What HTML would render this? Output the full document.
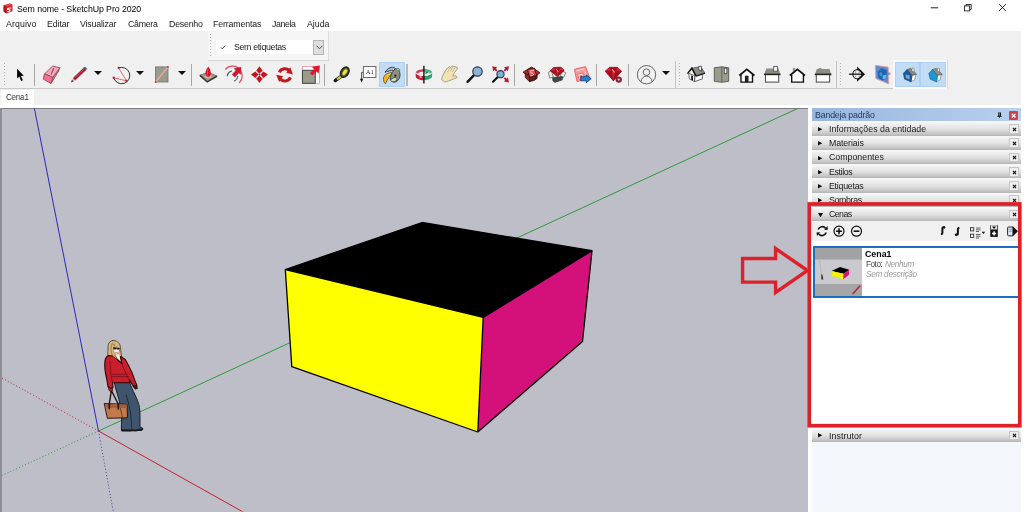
<!DOCTYPE html>
<html lang="pt-BR">
<head>
<meta charset="utf-8">
<title>Sem nome - SketchUp Pro 2020</title>
<style>
*{margin:0;padding:0;box-sizing:border-box}
html,body{width:1024px;height:513px;overflow:hidden;background:#fff}
body{position:relative;font-family:"Liberation Sans",sans-serif;font-size:9px;color:#1a1a1a}
.a{position:absolute}
.t{position:absolute;white-space:nowrap;line-height:12px;height:12px;z-index:5;will-change:transform}
#annot{z-index:10}
#titlebar{left:0;top:0;width:1024px;height:17px;background:#fff}
#menubar{left:0;top:17px;width:1024px;height:14px;background:#fff}
#chrome{left:0;top:30.700px;width:1021px;height:58px;background:#f0f0f0}
#tbline{left:0;top:88px;width:948px;height:1px;background:#c8c8c8}
#tabrow{left:0;top:89px;width:1021px;height:15.600px;background:#f0f0f0}
#tab{left:.5px;top:89.500px;width:33.600px;height:18px;background:#fff}
#tabwhite{left:0;top:104.600px;width:1024px;height:3.400px;background:#fff}
#vpborder{left:0;top:107.700px;width:807.800px;height:1.200px;background:#7c7c82}
#viewport{left:0;top:108px;width:807.800px;height:403.600px;background:#bebec8;overflow:hidden}
#vpleft{left:0;top:108px;width:2px;height:403.600px;background:#8e8e96}
#tray{left:808px;top:106px;width:216px;height:407px;background:#fff}
#traybody{left:812px;top:108px;width:209px;height:403.600px;background:#f4f7fc}
#trayhead{left:812px;top:107.800px;width:209px;height:13.700px;background:linear-gradient(90deg,#98b6de 0%,#a9c3e6 50%,#b9d0ee 100%)}
.sec{position:absolute;left:812px;width:209px;height:12.300px;background:linear-gradient(180deg,#f2f2f2 0%,#e2e2e2 45%,#c4c4c4 85%,#b4b4b4 100%)}
.secgap{position:absolute;left:812px;width:209px;height:3px;background:#fafafa}
.sx{position:absolute;left:1009.200px;width:9.800px;height:9.800px;background:#ededed;border:1px solid #c6c6c6}
.tri{position:absolute;width:0;height:0;border-left:4px solid #111;border-top:2.5px solid transparent;border-bottom:2.5px solid transparent}
.dd{position:absolute;width:0;height:0;border-top:4.600px solid #111;border-left:4px solid transparent;border-right:4px solid transparent}
.sep{position:absolute;width:1px;background:#a8a8a8}
.grip{position:absolute;width:1px;background:repeating-linear-gradient(180deg,#b0b0b0 0 1px,transparent 1px 3px)}
.hl{position:absolute;background:#c3dcf6;border:1px solid #aed0f2}
</style>
</head>
<body>
<div class="a" id="titlebar"></div>
<div class="a" id="menubar"></div>
<div class="a" id="chrome"></div>
<div class="a" id="tbline"></div>
<div class="a" id="tabrow"></div>
<div class="a" id="tab"></div>
<div class="a" id="tabwhite"></div>
<div class="a" id="viewport"></div>
<div class="a" id="vpborder"></div>
<div class="a" id="vpleft"></div>
<div class="a" id="tray"></div>
<div class="a" id="traybody"></div>
<div class="a" id="trayhead"></div>
<svg class="a" id="scene" style="left:0;top:0" width="1024" height="513" viewBox="0 0 1024 513">
<defs><clipPath id="vpc"><rect x="2" y="108.5" width="805.5" height="403"/></clipPath></defs>
<g clip-path="url(#vpc)">
<!-- axes -->
<line x1="98.5" y1="431" x2="34.3" y2="108" stroke="#2a2ab8" stroke-width="1"/>
<line x1="98.5" y1="431" x2="113.5" y2="513" stroke="#3a3ab8" stroke-width="1" stroke-dasharray="1 2.2"/>
<line x1="98.5" y1="431" x2="800" y2="107.4" stroke="#2c9a3a" stroke-width="1"/>
<line x1="98.5" y1="431" x2="0" y2="476.4" stroke="#2c9a3a" stroke-width="1" stroke-dasharray="1 2.2"/>
<line x1="98.5" y1="431" x2="246" y2="513.6" stroke="#c0202c" stroke-width="1"/>
<line x1="98.5" y1="431" x2="0" y2="377" stroke="#c0202c" stroke-width="1" stroke-dasharray="1 2.2"/>
<!-- cube -->
<polygon points="285.3,269.5 422,222.5 592,250.7 483.2,317.4" fill="#000"/>
<polygon points="285.3,269.5 483.2,317.4 477.8,432 291.8,366.7" fill="#ffff00"/>
<polygon points="483.2,317.4 592,250.7 582.5,341.5 477.8,432" fill="#d4107a"/>
<g fill="none" stroke="#000" stroke-width="1.3" stroke-linejoin="round">
<polygon points="285.3,269.5 422,222.5 592,250.7 582.5,341.5 477.8,432 291.8,366.7"/>
<polyline points="285.3,269.5 483.2,317.4 592,250.7"/>
<line x1="483.2" y1="317.4" x2="477.8" y2="432"/>
</g>
<!--PERSONBEGIN-->
<g id="person" stroke-linejoin="round" stroke-linecap="round">
<!-- pants -->
<path d="M114.400 382.500L129.800 382.500C132 390 138.500 400 139.500 407.500 140.300 414 140 422 140 427L142.800 428.200 142.500 430 136 430.800 132.500 430.500 130 431 121.600 430.800 121.300 428C122 420 121.500 412 120.500 406 119 398 115.500 390 114.400 382.500Z" fill="#3f556d" stroke="#0e1620" stroke-width=".9"/>
<path d="M126 395C129 403 131.500 414 131.800 429.500" fill="none" stroke="#16222e" stroke-width=".8"/>
<!-- shoes -->
<path d="M121.500 429.300L130.500 429.600 136 429.500 142.600 428.300 142.500 430.300 136 431.200 121.600 431.200Z" fill="#15181c"/>
<!-- hair back -->
<path d="M112.800 340.500C109.800 340.700 108.200 343.300 108.100 346.500 108 350 107.600 353.500 107.900 356L112 357.500 120.500 357 122.300 363.300 123.600 361.500 121.300 355C120.900 352 120.700 349 120.200 346 119.500 342.300 116 340.200 112.800 340.500Z" fill="#d6b87e" stroke="#4a3818" stroke-width=".8"/>
<!-- neck / chest -->
<path d="M114.500 353.500L119 354.500 121.500 362 117.500 358.500Z" fill="#f4e6de"/>
<!-- jacket -->
<path d="M108.700 355.500C106.500 356.500 105.300 358 105 360.500 104.500 365 105 372 106.500 378L108 386.500 110.200 388.500 113 387.500 112.600 382.800 129.800 382.800 129.300 379.500 133.500 386.500 136.800 385 135 381C133 374 128.500 365 125.300 359.500L120.500 356.500 121.800 363.500 113.500 356Z" fill="#c91f2c" stroke="#2a0808" stroke-width="1.100"/>
<path d="M113.500 356L121.800 363.500 120.500 356.500" fill="none" stroke="#3a0c10" stroke-width=".8"/>
<path d="M112.600 374.300L127.400 374.300M112 376.600L128.200 376.600" stroke="#6a1018" stroke-width=".7" fill="none"/>
<path d="M110 362C110.500 370 111.300 378 112.600 382.800" fill="none" stroke="#6a1018" stroke-width=".8"/>
<path d="M122 364C123.500 369 126.500 375 129.300 379.500" fill="none" stroke="#6a1018" stroke-width=".8"/>
<!-- hair front strands -->
<path d="M112 344C110.500 348 110.800 352 112.500 355.500L117 359.500C114.500 355 113.500 350 114.500 345Z" fill="#d6b87e" stroke="#5a4420" stroke-width=".5"/>
<!-- face -->
<ellipse cx="116.400" cy="350.500" rx="3.100" ry="3.600" fill="#f8ecea" stroke="#7a5a4a" stroke-width=".5"/>
<path d="M113.200 347.300L119.700 347.900 119.500 349.500 116.900 349.600 116.400 348.600 115.800 349.500 113.400 349.200Z" fill="#1a1a22"/>
<path d="M115.300 352.300L117.500 352.500" stroke="#c05050" stroke-width=".6"/>
<!-- hands -->
<path d="M108.500 386.500L110.300 388.600 112.800 387.600 112.500 391 110.500 391.800 108.900 390Z" fill="#b81c28" stroke="#3a0c10" stroke-width=".7"/>
<path d="M133.600 386.300L136.800 385 137.500 388.500 135.300 389.300 134 388Z" fill="#3a1418" stroke="#1a0808" stroke-width=".6"/>
<!-- bag -->
<path d="M111.200 391.500L109.300 404 109.300 408.500M112.200 392L118.200 404 118.400 408.500" fill="none" stroke="#1c100a" stroke-width="1.400"/>
<path d="M104.600 403.500L127 404.300 127.500 417.800 107.800 418.300Z" fill="#c27a4a" stroke="#2a1408" stroke-width="1"/>
<path d="M104.800 403.800L126.900 404.600 127 408 105.400 407.500Z" fill="#a05e3a"/>
<path d="M120.400 408.300L122.600 417.800" stroke="#5a3018" stroke-width=".8"/>
<path d="M109.300 403.800V408.800M118.300 404V409" stroke="#1c100a" stroke-width="1.600"/>
</g>
<!--PERSONEND-->
</g>
</svg>

<!--TEXTBEGIN-->
<span class="t" id="t_title" style="left:16.90px;top:2.55px;font-size:8.8px;letter-spacing:-0.091px;color:#000">Sem nome - SketchUp Pro 2020</span>
<span class="t" id="m1" style="left:5.50px;top:17.95px;font-size:8.8px;letter-spacing:0.094px;">Arquivo</span>
<span class="t" id="m2" style="left:47.00px;top:17.95px;font-size:8.8px;letter-spacing:-0.110px;">Editar</span>
<span class="t" id="m3" style="left:80.00px;top:17.95px;font-size:8.8px;letter-spacing:-0.172px;">Visualizar</span>
<span class="t" id="m4" style="left:127.50px;top:17.95px;font-size:8.8px;letter-spacing:-0.279px;">Câmera</span>
<span class="t" id="m5" style="left:168.50px;top:17.95px;font-size:8.8px;letter-spacing:-0.220px;">Desenho</span>
<span class="t" id="m6" style="left:212.50px;top:17.95px;font-size:8.8px;letter-spacing:-0.147px;">Ferramentas</span>
<span class="t" id="m7" style="left:272.00px;top:17.95px;font-size:8.8px;letter-spacing:-0.406px;">Janela</span>
<span class="t" id="m8" style="left:307.00px;top:17.95px;font-size:8.8px;letter-spacing:-0.027px;">Ajuda</span>
<span class="t" id="t_tag" style="left:234.20px;top:40.55px;font-size:8.8px;letter-spacing:-0.336px;">Sem etiquetas</span>
<span class="t" id="t_tab" style="left:5.80px;top:91.14px;letter-spacing:0.000px;font-size:9.700px;transform:scaleX(0.795);transform-origin:0 0">Cena1</span>
<span class="t" id="t_tray" style="left:815.00px;top:108.95px;font-size:8.8px;letter-spacing:-0.171px;color:#1e395b">Bandeja padrão</span>
<span class="t" id="s1" style="left:828.60px;top:122.85px;font-size:8.8px;letter-spacing:0.012px;">Informações da entidade</span>
<span class="t" id="s2" style="left:828.60px;top:137.10px;font-size:8.8px;letter-spacing:-0.111px;">Materiais</span>
<span class="t" id="s3" style="left:828.60px;top:151.35px;font-size:8.8px;letter-spacing:0.003px;">Componentes</span>
<span class="t" id="s4" style="left:828.60px;top:165.60px;font-size:8.8px;letter-spacing:-0.369px;">Estilos</span>
<span class="t" id="s5" style="left:828.60px;top:179.85px;font-size:8.8px;letter-spacing:-0.247px;">Etiquetas</span>
<span class="t" id="s6" style="left:828.60px;top:194.10px;font-size:8.8px;letter-spacing:-0.350px;">Sombras</span>
<span class="t" id="s7" style="left:828.60px;top:208.35px;font-size:8.8px;letter-spacing:-0.583px;">Cenas</span>
<span class="t" id="s8" style="left:828.60px;top:429.55px;font-size:8.8px;letter-spacing:0.083px;">Instrutor</span>
<span class="t" id="c1" style="left:865.40px;top:248.45px;font-size:8.8px;letter-spacing:0.022px;font-weight:bold;color:#000">Cena1</span>
<span class="t" id="c2" style="left:865.80px;top:259.16px;letter-spacing:-0.471px;font-size:8.200px;color:#444">Foto:</span>
<span class="t" id="c3" style="left:885.20px;top:259.16px;letter-spacing:-0.305px;font-size:8.200px;font-style:italic;color:#9a9a9a">Nenhum</span>
<span class="t" id="c4" style="left:866.40px;top:269.16px;letter-spacing:-0.250px;font-size:8.200px;font-style:italic;color:#9a9a9a">Sem descrição</span>
<!--TEXTEND-->
<!--ICONSBEGIN-->
<svg class="a" style="left:3px;top:2.500px" width="10" height="11" viewBox="0 0 10 11">
<path d="M.6 2.200L7 .4l2.500 1.300v6.600L3.200 10.500.6 8.600z" fill="#d8232a"/>
<path d="M.6 2.200L3.200 3.600 9.500 1.700 7 .4z" fill="#e8484c"/>
<path d="M3.200 3.600v6.900L.6 8.600V2.200z" fill="#b0151c"/>
<path d="M4.300 5.300c1.300-.9 3-1.200 4.200-.6l-.5 1c-1-.4-2.100-.200-2.900.4.900.2 2.400.3 2.500 1.400.1 1-1.500 1.600-3.300 1.500l.1-1c.9.100 2-.1 2-.5 0-.5-2.100-.2-2.500-1.100-.1-.4 0-.8.400-1.100z" fill="#fff"/>
</svg>
<svg class="a" style="left:925px;top:0" width="99" height="17" viewBox="925 0 99 17">
<path d="M930.800 7.800h7.400" stroke="#222" stroke-width="1"/>
<rect x="964.500" y="5.900" width="5.200" height="5" fill="none" stroke="#222" stroke-width=".9"/>
<path d="M966 5.900v-1.400h5.200v4.900h-1.500" fill="none" stroke="#222" stroke-width=".9"/>
<path d="M999 4.100l6.900 6.900M1005.900 4.100l-6.900 6.900" stroke="#222" stroke-width="1"/>
</svg>
<div class="a" style="left:207.500px;top:31px;width:121px;height:29.500px;background:#f5f5f5;border-right:1px solid #dcdcdc;border-bottom:1px solid #d4d4d4"></div>
<div class="grip" style="left:210px;top:34px;height:23px"></div>
<div class="a" style="left:216.300px;top:40px;width:97.200px;height:14.400px;background:#fff"></div>
<div class="a" style="left:313.300px;top:39.500px;width:11px;height:15.200px;background:#dedede;border:1px solid #b4b4b4"></div>
<svg class="a" style="left:315.500px;top:45px" width="7" height="5" viewBox="0 0 7 5"><path d="M.6 .8L3.500 3.800 6.400 .8" fill="none" stroke="#555" stroke-width="1"/></svg>
<svg class="a" style="left:220.400px;top:45.200px" width="6" height="4.600" viewBox="0 0 7 6"><path d="M.8 3.200L2.600 5 6.200 .9" fill="none" stroke="#333" stroke-width="1.200"/></svg>
<div class="a" style="left:893px;top:59.500px;width:55px;height:29px;background:#f7f9fb;border-right:1px solid #d8d8d8"></div>
<div class="hl" style="left:379.4px;top:62.100px;width:25.5px;height:24.600px"></div>
<div class="hl" style="left:895.4px;top:62.100px;width:25px;height:24.600px"></div>
<div class="hl" style="left:920.4px;top:62.100px;width:25.2px;height:24.600px"></div>
<div class="grip" style="left:4px;top:63px;height:23px"></div>
<div class="sep" style="left:33.9px;top:64px;height:22px"></div>
<div class="sep" style="left:190.9px;top:64px;height:22px"></div>
<div class="sep" style="left:323.9px;top:64px;height:22px"></div>
<div class="sep" style="left:513.9px;top:64px;height:22px"></div>
<div class="sep" style="left:595.9px;top:64px;height:22px"></div>
<div class="sep" style="left:627.8px;top:64px;height:22px"></div>
<div class="sep" style="left:406.200px;top:64px;height:22px;width:1.500px;background:#b8b8b8"></div>
<div class="sep" style="left:674.9px;top:61px;height:27px;background:#c4c4c4"></div>
<div class="grip" style="left:678.9px;top:63px;height:23px"></div>
<div class="sep" style="left:836.0px;top:61px;height:27px;background:#c4c4c4"></div>
<div class="grip" style="left:840.0px;top:63px;height:23px"></div>
<div class="dd" style="left:93.9px;top:70.700px"></div>
<div class="dd" style="left:135.8px;top:70.700px"></div>
<div class="dd" style="left:177.9px;top:70.700px"></div>
<div class="dd" style="left:662px;top:70.700px"></div>
<svg class="a" id="tbicons" style="left:0;top:60px;will-change:transform" width="1024" height="28" viewBox="0 60 1024 28">
<!--TBBEGIN-->
<!-- cursor -->
<path d="M17.100 68.700V78.400L19.300 76.500 21.200 80.900 22.900 80.200 20.900 76 23.800 75.700Z" fill="#000"/>
<!-- eraser -->
<g stroke="#8a4050" stroke-width=".8" stroke-linejoin="round">
<path d="M59.800 67.700L58.700 71 51 83.400 52.900 77.300Z" fill="#e0849a"/>
<path d="M52.600 66.100L59.800 67.700 52.900 77.300 44.500 73.900Z" fill="#f4a8ba"/>
<path d="M44.500 73.900L52.900 77.300 51 83.400 43.200 79.100Z" fill="#f4708e"/>
</g>
<path d="M53.500 68.700L51.300 73.900" stroke="#b84060" stroke-width="1.200" stroke-linecap="round"/>
<!-- pencil -->
<g>
<path d="M70.900 82.500L72 79.500 73.900 81.200Z" fill="#444"/>
<path d="M72 79.500L73.300 78.100 75.300 79.900 73.900 81.200Z" fill="#f0a8a8"/>
<path d="M73.300 78.100L83.700 68.100 85.700 70 75.300 79.900Z" fill="#b41a30" stroke="#5a2028" stroke-width=".6"/>
<path d="M83.700 68.100L84.900 66.900 86.900 68.800 85.700 70Z" fill="#666" stroke="#333" stroke-width=".5"/>
<path d="M75 77.700L84 69.100" stroke="#e05868" stroke-width=".6"/>
</g>
<!-- arc -->
<g fill="none">
<path d="M118.600 67.900A8.200 8.200 0 1 1 113.700 77.800" stroke="#333" stroke-width="1"/>
<path d="M118.600 67.900L126.500 80.800L113.700 77.800" stroke="#e05868" stroke-width=".9"/>
</g>
<circle cx="118.600" cy="67.900" r="1.100" fill="#c8203c"/><circle cx="113.700" cy="77.800" r="1.200" fill="#c8203c"/><circle cx="126.500" cy="80.800" r="1.200" fill="#c8203c"/>
<!-- rectangle -->
<rect x="155.400" y="66.900" width="12.600" height="15.100" fill="#9b9b8c" stroke="#73736a" stroke-width=".8"/>
<path d="M155.600 82L167.900 67" stroke="#eaa8a0" stroke-width="1.500"/>
<circle cx="155.600" cy="82" r=".9" fill="#d02838"/><circle cx="167.900" cy="67" r=".9" fill="#d02838"/>
<!-- push/pull -->
<path d="M199.600 75L208.200 71.900 217.200 75.700 217.200 77 207.100 82.800 199.600 76.300Z" fill="#333"/>
<path d="M200.600 75L208.200 72.300 216.200 75.700 207.300 80.900Z" fill="#9b9b8c"/>
<ellipse cx="208.200" cy="76.300" rx="3.300" ry="1.500" fill="#f0b8b0"/>
<path d="M208.300 66.600C209.800 68.800 211 71 210.800 73.800 210.700 75.800 209.700 76.900 208.300 76.900 206.800 76.900 205.500 75.800 205.400 73.800 205.300 71 206.700 68.800 208.300 66.600Z" fill="#d8142a"/>
<path d="M207.500 69.500v6" stroke="#f05060" stroke-width=".8"/>
<!-- follow me -->
<g fill="none" stroke-linecap="round">
<path d="M225.600 69.200C229 65 236.500 65 240.300 70 243 74 242.500 79 239.500 82.600" stroke="#e04a5c" stroke-width="1.200"/>
<path d="M227.200 75.800C227.600 73.800 229.300 71.800 231.500 71.100" stroke="#355a58" stroke-width="1.100"/>
<path d="M237.700 76.500C237.500 78.300 236.300 80 234.600 80.900" stroke="#355a58" stroke-width="1.100"/>
</g>
<path d="M241 67.300L240.600 74.300 238.800 72.700 235 77 232.200 74.500 236 70.400 234.300 68.800Z" fill="#d8142a" stroke="#8a1420" stroke-width=".5"/>
<!-- move -->
<g fill="#c4141e">
<path d="M259.400 66.300L262.600 70.800 259.400 74 256.200 70.800Z"/>
<path d="M259.400 83L262.600 78.500 259.400 75.300 256.200 78.500Z"/>
<path d="M250.900 74.600L255.500 71.400 258.700 74.600 255.500 77.900Z"/>
<path d="M267.900 74.600L263.300 71.400 260.100 74.600 263.300 77.900Z"/>
</g>
<path d="M256.600 71.800L262.200 77.400M262.200 71.800L256.600 77.400" stroke="#f6e6e6" stroke-width="1.100"/>
<circle cx="259.400" cy="74.600" r=".8" fill="#8a1018"/>
<!-- rotate -->
<g fill="none" stroke="#c4141e" stroke-width="3">
<path d="M279.300 72.300A6 6 0 0 1 289.700 71.300"/>
<path d="M290.400 77.300A6 6 0 0 1 280.700 79.300"/>
</g>
<path d="M290.200 67.300L293 74.400 286.200 72.800Z" fill="#c4141e"/>
<path d="M279.200 81.900L276.200 74.800 283.100 76.300Z" fill="#c4141e"/>
<!-- scale -->
<rect x="302.300" y="66.600" width="17.300" height="16.800" fill="#fff" stroke="#e8909c" stroke-width=".8"/>
<rect x="302.500" y="70.300" width="12.800" height="13" fill="#9b9b8c" stroke="#444" stroke-width="1"/>
<path d="M319.900 65.400L318.600 73.600 316.400 71.400 312.300 75.600 309.900 73.200 314 69 311.800 66.800Z" fill="#e0142c"/>
<!-- tape measure -->
<path d="M335.200 80.600L341.500 76.200" stroke="#111" stroke-width="3.300" stroke-linecap="round"/>
<path d="M337 79.400L342 75.900" stroke="#d2d23c" stroke-width="2.100"/>
<ellipse cx="344.800" cy="72.200" rx="3.600" ry="5.300" transform="rotate(32 344.800 72.200)" fill="#6e6e2c" stroke="#262626" stroke-width="1.900"/>
<ellipse cx="344.900" cy="72.200" rx="1.700" ry="3.300" transform="rotate(32 344.900 72.200)" fill="#e2e246"/>
<!-- text tool -->
<rect x="363.400" y="66.500" width="12.500" height="11" fill="#fff" stroke="#6a6a6a" stroke-width="1"/>
<path d="M363.400 72.300H361.600V79.200" fill="none" stroke="#444" stroke-width=".9"/>
<path d="M360 78.800H363.200L361.600 82.500Z" fill="#111"/>
<text x="369.800" y="74" font-family="'Liberation Serif',serif" font-size="6.800" text-anchor="middle" fill="#333">A1</text>
<!-- paint bucket -->
<path d="M391.400 72.500C388 72.700 384.500 74.500 383.600 77.500 383 80 384 83 385.400 83.800 386.500 82 387 79.800 388.500 78 389.500 76.500 391 74.500 392.200 73Z" fill="#f2b61c" stroke="#4a4020" stroke-width=".7"/>
<path d="M387.200 75.500L390.500 73.600" stroke="#f8d868" stroke-width=".9"/>
<path d="M385 72.300C386.500 69.500 389.500 67.300 392 67.200 393.500 67.200 395 67.800 395.600 68.600L393.500 70.600C391 70.200 387 71.500 385 72.300Z" fill="#b6b6be" stroke="#25403e" stroke-width=".9" stroke-linejoin="round"/>
<path d="M393.500 70.600L395.600 68.600C397.500 69.200 399.300 70.800 399.800 72.800 400.500 75.500 399.600 79 397.500 80.800 396 82.200 394 82.600 392.500 81.600L390 79.200C390.300 76.500 391.500 73.500 393.500 70.600Z" fill="#8f8f84" stroke="#25403e" stroke-width=".9" stroke-linejoin="round"/>
<ellipse cx="393.900" cy="79.700" rx="3.300" ry="1.900" transform="rotate(-18 393.900 79.700)" fill="#dcdcb4" stroke="#25403e" stroke-width=".7"/>
<path d="M396.200 69.600C397.200 67.800 400 68.400 399.700 70.800" fill="#c4e2da" stroke="#2a6a68" stroke-width="1"/>
<circle cx="395.400" cy="75.700" r="1.100" fill="#111"/>
<!-- orbit -->
<path d="M415.800 72.300C416.500 70.300 420 69.200 424 69.200V71.600C421 71.600 418.500 72.500 418.200 73.800Z" fill="#d23c56"/>
<path d="M432 72.300C431.500 70.300 428 69 424 69V71.500C427 71.500 429.300 72.400 429.700 73.700Z" fill="#46b47e"/>
<path d="M415.700 72.300C416 75 419.500 76.200 424 76.200V80.300C419 80.300 415.700 78.600 415.700 76.300Z" fill="#c01c3a"/>
<path d="M432.100 72.300C431.800 75 428.500 76 424 76V80C429 80 432.100 78.300 432.100 76Z" fill="#2e9e68"/>
<path d="M418.400 73.600C419.500 74.700 421.500 75.300 424 75.300" stroke="#fbe4e8" stroke-width="1.100" fill="none"/>
<path d="M424 75.200C426.500 75.200 428.600 74.600 429.600 73.600" stroke="#e0f6ea" stroke-width="1.100" fill="none"/>
<path d="M425.500 71.300L428.500 72.600 425.500 74.200Z" fill="#1e7e50"/>
<path d="M421.500 78.300L418.800 77 421.500 75.800Z" fill="#f4c0c8"/>
<path d="M423.900 65.700V83.500" stroke="#111" stroke-width="1.400"/>
<!-- hand -->
<path d="M441.500 79.500C442.500 75.500 445 70.500 447.500 68L449.500 66.800 450.500 67.300 452.500 66 453.800 66.600 455.300 66.400 456.200 67.300 457.300 67.800 457.400 69 454.500 72.500 452.800 75.600 456.500 76.200 457 77.600 451.500 79.800 446.500 81.700 444.500 82Z" fill="#f2e2b4" stroke="#8e8e74" stroke-width=".8" stroke-linejoin="round"/>
<path d="M450.300 67.600L447.600 71.800M452.800 66.800L450 71.600M455.300 67.200L452.300 72" stroke="#a8a484" stroke-width=".6" fill="none"/>
<!-- zoom -->
<path d="M473.600 75.700L467.500 81.800" stroke="#111" stroke-width="2.400" stroke-linecap="round"/>
<circle cx="477.500" cy="71.500" r="4.700" fill="#8db2da" stroke="#28384a" stroke-width="1.200"/>
<!-- zoom extents -->
<path d="M497.500 77.300L493 81.700" stroke="#111" stroke-width="2.200" stroke-linecap="round"/>
<circle cx="500.500" cy="74.200" r="3.600" fill="#7cb2d2" stroke="#28384a" stroke-width="1.100"/>
<g fill="#c4142a">
<path d="M492.300 66.300L497.300 67.200 495.900 68.600 497.500 70.200 496.200 71.500 494.600 69.900 493.200 71.300Z"/>
<path d="M508.900 66.300L503.900 67.200 505.300 68.600 503.700 70.200 505 71.500 506.600 69.900 508 71.300Z"/>
<path d="M508.900 82.400L503.900 81.500 505.300 80.100 503.700 78.500 505 77.200 506.600 78.800 508 77.400Z"/>
</g>
<!-- 3D warehouse -->
<g stroke="#3a1414" stroke-width=".9" stroke-linejoin="round">
<path d="M523 72.200L531.500 67 540 72.800 531.800 78.500Z" fill="#b82830"/>
<path d="M525.300 73L525.300 77.500 529.500 81.600 537 78.600 537.200 74.500 531.800 78.500Z" fill="#8a2a2a"/>
<path d="M527.500 69.500L534.500 68.200 536.500 75.500 529.500 77.500Z" fill="#e84a50"/>
<path d="M529.500 77.500L536.500 75.500 535 80 529.500 81.600Z" fill="#5a2424"/>
</g>
<path d="M530 71.500C531.500 70.300 533.300 70.200 534 70.800M530.300 72.500C532 73 534 73.300 533.300 75 532.500 75.800 531 75.800 530.500 75.500" fill="none" stroke="#ffd8d8" stroke-width="1"/>
<!-- extension warehouse -->
<g stroke-linejoin="round">
<path d="M548.300 72.300L551.500 70.800 553.200 77 549.800 78.200Z" fill="#ececec" stroke="#5a5a5a" stroke-width=".7"/>
<path d="M562 70.800L565.900 72.800 563.300 77.800 560.300 76.600Z" fill="#ececec" stroke="#5a5a5a" stroke-width=".7"/>
<path d="M552.600 77.600L562.600 76.600 562.200 80 554.800 82.400 552.800 80.700Z" fill="#3e4648" stroke="#2a3032" stroke-width=".6"/>
<path d="M550.400 70.800L553.600 67.500 560.800 67.200 564.200 70.300 557.600 76.800Z" fill="#b40e1e" stroke="#5e0a12" stroke-width=".7"/>
<path d="M553.600 67.500L556 70.500 550.400 70.800M560.800 67.200L558.800 70.300 564.200 70.300M556 70.500L557.600 76.800 558.800 70.300Z" fill="#d82838" stroke="#8a1420" stroke-width=".4"/>
<path d="M556.200 69L558.300 71.800" stroke="#ff9aa0" stroke-width=".9"/>
</g>
<!-- send to layout -->
<path d="M574.400 69.300L585.500 66.600 589.800 78 577 81.600Z" fill="#f49a9a" stroke="#e85c64" stroke-width=".9" stroke-linejoin="round"/>
<path d="M576.300 70.900L584.600 68.900" stroke="#fde4e4" stroke-width="1"/>
<path d="M577.600 74.200L582.700 73 584.200 77.800 579 79.200Z" fill="#fde4e4" stroke="#e85c64" stroke-width=".8"/>
<path d="M579.300 75.700L581.800 75.100 582.500 77.200 580 77.900Z" fill="#ec6068"/>
<path d="M585.200 71.500L587 76.500" stroke="#fde4e4" stroke-width=".9"/>
<path d="M580.800 76.700H586.200V74.800L591.200 78.700 586.200 82.700V80.800H580.800Z" fill="#1a84e4" stroke="#0c2a50" stroke-width=".7" stroke-linejoin="round"/>
<!-- extension manager -->
<path d="M605.200 71.200L609.600 67.300 617.300 67.300 621.600 71.200 613.400 80.900Z" fill="#ac0c1a" stroke="#5e0a12" stroke-width=".6" stroke-linejoin="round"/>
<path d="M609.600 67.300L611.500 71.200 605.200 71.200M617.300 67.300L615.500 71.200 621.600 71.200M611.500 71.200L613.400 80.900 615.500 71.200Z" fill="#d02434" stroke="#8a1420" stroke-width=".4"/>
<path d="M612 69.200L614.600 72.300" stroke="#ff9aa0" stroke-width="1.100"/>
<circle cx="618.700" cy="79.600" r="3.200" fill="#842234"/>
<circle cx="618.700" cy="79.600" r="1.100" fill="#f0c4cc"/>
<!-- user -->
<g fill="none" stroke="#555" stroke-width=".9">
<circle cx="646.500" cy="74.700" r="9.200"/>
<circle cx="646.500" cy="72.200" r="3.300"/>
<path d="M640.800 81.900C641.300 78.500 643.500 76.100 646.500 76.100 649.500 76.100 651.700 78.500 652.200 81.900"/>
</g>
<!-- iso view -->
<path d="M688.800 73.400L694.900 75.800 694.600 81.600 689.400 78.900Z" fill="#fff" stroke="#444" stroke-width=".8"/>
<path d="M694.900 75.800L702.400 73.800 702.400 78.900 694.600 81.600Z" fill="#fafafa" stroke="#444" stroke-width=".8"/>
<path d="M691.200 75.200L693 76V80.600L691.200 79.700Z" fill="#111"/>
<path d="M691.800 68.200L700.800 66.700 704.900 73.100 696.100 76.100Z" fill="#8c8c82" stroke="#444" stroke-width=".7"/>
<path d="M698.700 66.500L701.400 66.200 701.600 71 698.900 70.200Z" fill="#fff" stroke="#333" stroke-width=".8"/>
<path d="M687.500 73.600L691.800 68.200 696.100 76.100" fill="none" stroke="#111" stroke-width="1.500" stroke-linejoin="miter"/>
<path d="M696.100 76.100L704.900 73.100" stroke="#222" stroke-width="1.200"/>
<!-- top view -->
<path d="M714.300 67.800L721.800 66.800 728.700 67.800 728.700 81.300 721.800 82.300 714.300 81.300Z" fill="#9b9b8c" stroke="#555" stroke-width=".9" stroke-linejoin="round"/>
<path d="M721.800 66.800V82.300" stroke="#555" stroke-width=".8"/>
<rect x="724.300" y="68.200" width="2.500" height="5.500" fill="#fff" stroke="#444" stroke-width=".8"/>
<!-- front view -->
<path d="M741 75V82.100H752.500V75" fill="#fff" stroke="#111" stroke-width="1.400"/>
<path d="M741.500 74.800L746.800 70.500 752 74.800Z" fill="#fff"/>
<rect x="744.900" y="75.700" width="3.600" height="6.400" fill="#222"/>
<path d="M739.300 75.500L746.800 69.400 754.500 75.500" fill="none" stroke="#111" stroke-width="1.700"/>
<!-- right view -->
<rect x="765.500" y="74.500" width="13.200" height="7.600" fill="#fff" stroke="#555" stroke-width="1.100"/>
<path d="M766.300 68.500H778.500L780.400 74.500H764.100Z" fill="#8c8c82"/>
<path d="M764 74.400H780.500" stroke="#222" stroke-width="1.500"/>
<rect x="773.700" y="66.400" width="3.700" height="4.800" fill="#fff" stroke="#555" stroke-width=".9"/>
<!-- back view -->
<path d="M793.200 71.500V68.300H794.800V70.500" fill="#aaa" stroke="#777" stroke-width=".6"/>
<path d="M791.700 75V82.100H803.400V75L797.400 70.300Z" fill="#fff"/>
<path d="M791.700 75V82.100H803.400V75" fill="none" stroke="#111" stroke-width="1.400"/>
<path d="M789.800 75.500L797.400 69.400 805 75.500" fill="none" stroke="#111" stroke-width="1.700"/>
<!-- left view -->
<rect x="816.300" y="74.500" width="13.300" height="7.600" fill="#fff" stroke="#555" stroke-width="1.100"/>
<path d="M816.800 69H829.600L831.300 74.500H814.900Z" fill="#8c8c82"/>
<path d="M817.900 69C818.500 68 821.500 68 822.300 69Z" fill="#777"/>
<path d="M814.800 74.400H831.400" stroke="#222" stroke-width="1.500"/>
<!-- section display icon (crosshair) -->
<circle cx="857.400" cy="74.200" r="4.600" fill="none" stroke="#222" stroke-width="1.100"/>
<path d="M849 74.200H864" stroke="#111" stroke-width="1.300"/>
<path d="M857 66.600L865 74.200 857 81.800 857 79.600 862.400 74.200 857 68.800Z" fill="#111"/>
<path d="M855 72.200h1.200M858.500 72.200h1.200M855 76.300h1.200M858.500 76.300h1.200" stroke="#555" stroke-width=".7"/>
<!-- section plane -->
<path d="M875.300 65.300L888.100 67.100 888.600 72.400 890.800 73.700 888.600 75.200 888.700 83.900 875.800 78.600Z" fill="#6088cc" stroke="#e8a0a8" stroke-width=".9" stroke-linejoin="round"/>
<path d="M877.600 72L881.500 68 886.600 70.300 887.200 77.800 882.500 80.600 878.200 77.800Z" fill="#1c66b2"/>
<path d="M882.700 75.500L886.500 74.500 886.500 78 882.700 79.500Z" fill="#6ab8e4"/>
<path d="M879.500 73L881.800 71.500 882 76.500 879.700 75.500Z" fill="#4a92d0"/>
<!-- section cuts -->
<path d="M907 69.600L910.600 68.300 916.900 74.400 912 75.400Z" fill="#8a8a80" stroke="#444" stroke-width=".5"/>
<path d="M912 68.300H914V72L912 71Z" fill="#fff" stroke="#555" stroke-width=".5"/>
<path d="M912 75.400L915.500 74.800 914.800 79.700 911 81.800Z" fill="#fff" stroke="#555" stroke-width=".5"/>
<path d="M907 69.600L912 75.400 911 81.900 904.600 79.100 903.300 73.400Z" fill="#1a5a9a" stroke="#0e3c6c" stroke-width=".6" stroke-linejoin="round"/>
<path d="M905.600 74.500L909.800 75.600 909.500 79.500 905.900 78Z" fill="#7aa4d0"/>
<!-- section fill -->
<path d="M932.500 69.600L936.100 68.300 942.400 74.400 937.500 75.400Z" fill="#9a8a80" stroke="#444" stroke-width=".5"/>
<path d="M937.500 68.300H939.500V72L937.500 71Z" fill="#fff" stroke="#555" stroke-width=".5"/>
<path d="M937.500 75.400L941 74.800 940.300 79.700 936.500 81.800Z" fill="#fff" stroke="#555" stroke-width=".5"/>
<path d="M932.500 69.600L937.500 75.400 936.500 81.900 930.100 79.100 928.800 73.400Z" fill="#1c98d2" stroke="#12608c" stroke-width=".6" stroke-linejoin="round"/>
<!--TBEND-->
</svg>
<!--ICONSEND-->
<!--TRAYBEGIN-->
<div class="a" style="left:812px;top:121px;width:209px;height:100px;background:#f6f6f6"></div>
<div class="sec" style="top:123.30px"></div>
<div class="sx" style="top:124.20px"></div>
<svg class="a" style="left:1011.600px;top:126.80px" width="5" height="5" viewBox="0 0 5 5"><path d="M1 1L4 4M4 1L1 4" stroke="#222" stroke-width="1.200"/></svg>
<svg class="a" style="left:818.3px;top:127.10px" width="4.3" height="4.6" viewBox="0 0 4.3 4.6"><path d="M0 0V4.6L4.3 2.3Z" fill="#111"/></svg>
<div class="sec" style="top:137.55px"></div>
<div class="sx" style="top:138.45px"></div>
<svg class="a" style="left:1011.600px;top:141.05px" width="5" height="5" viewBox="0 0 5 5"><path d="M1 1L4 4M4 1L1 4" stroke="#222" stroke-width="1.200"/></svg>
<svg class="a" style="left:818.3px;top:141.35px" width="4.3" height="4.6" viewBox="0 0 4.3 4.6"><path d="M0 0V4.6L4.3 2.3Z" fill="#111"/></svg>
<div class="sec" style="top:151.80px"></div>
<div class="sx" style="top:152.70px"></div>
<svg class="a" style="left:1011.600px;top:155.30px" width="5" height="5" viewBox="0 0 5 5"><path d="M1 1L4 4M4 1L1 4" stroke="#222" stroke-width="1.200"/></svg>
<svg class="a" style="left:818.3px;top:155.60px" width="4.3" height="4.6" viewBox="0 0 4.3 4.6"><path d="M0 0V4.6L4.3 2.3Z" fill="#111"/></svg>
<div class="sec" style="top:166.05px"></div>
<div class="sx" style="top:166.95px"></div>
<svg class="a" style="left:1011.600px;top:169.55px" width="5" height="5" viewBox="0 0 5 5"><path d="M1 1L4 4M4 1L1 4" stroke="#222" stroke-width="1.200"/></svg>
<svg class="a" style="left:818.3px;top:169.85px" width="4.3" height="4.6" viewBox="0 0 4.3 4.6"><path d="M0 0V4.6L4.3 2.3Z" fill="#111"/></svg>
<div class="sec" style="top:180.30px"></div>
<div class="sx" style="top:181.20px"></div>
<svg class="a" style="left:1011.600px;top:183.80px" width="5" height="5" viewBox="0 0 5 5"><path d="M1 1L4 4M4 1L1 4" stroke="#222" stroke-width="1.200"/></svg>
<svg class="a" style="left:818.3px;top:184.10px" width="4.3" height="4.6" viewBox="0 0 4.3 4.6"><path d="M0 0V4.6L4.3 2.3Z" fill="#111"/></svg>
<div class="sec" style="top:194.55px"></div>
<div class="sx" style="top:195.45px"></div>
<svg class="a" style="left:1011.600px;top:198.05px" width="5" height="5" viewBox="0 0 5 5"><path d="M1 1L4 4M4 1L1 4" stroke="#222" stroke-width="1.200"/></svg>
<svg class="a" style="left:818.3px;top:198.35px" width="4.3" height="4.6" viewBox="0 0 4.3 4.6"><path d="M0 0V4.6L4.3 2.3Z" fill="#111"/></svg>
<div class="sec" style="top:208.80px"></div>
<div class="sx" style="top:209.70px"></div>
<svg class="a" style="left:1011.600px;top:212.30px" width="5" height="5" viewBox="0 0 5 5"><path d="M1 1L4 4M4 1L1 4" stroke="#222" stroke-width="1.200"/></svg>
<svg class="a" style="left:817.8px;top:212.50px" width="5" height="4.4" viewBox="0 0 5 4.4"><path d="M0 0H5L2.5 4.4Z" fill="#111"/></svg>
<div class="sec" style="top:429.60px"></div>
<div class="sx" style="top:430.50px"></div>
<svg class="a" style="left:1011.600px;top:433.10px" width="5" height="5" viewBox="0 0 5 5"><path d="M1 1L4 4M4 1L1 4" stroke="#222" stroke-width="1.200"/></svg>
<svg class="a" style="left:818.3px;top:433.40px" width="4.3" height="4.6" viewBox="0 0 4.3 4.6"><path d="M0 0V4.6L4.3 2.3Z" fill="#111"/></svg>
<div class="a" style="left:812px;top:221px;width:209px;height:20.4px;background:#f0f0f0"></div>
<div class="a" style="left:812px;top:241.4px;width:209px;height:183px;background:#fff"></div>
<div class="a" style="left:813px;top:246px;width:207px;height:51.8px;border:2px solid #1b6fbe;background:#fff"></div>
<svg class="a" style="left:815px;top:248px" width="47" height="48" viewBox="0 0 47 48">
<rect width="47" height="48" fill="#c9c9ce"/>
<rect width="47" height="11.5" fill="#a2a2a4"/>
<rect y="36" width="47" height="12" fill="#a6a6a8"/>
<line x1="4.5" y1="12" x2="7" y2="30" stroke="#a8a8c8" stroke-width=".6"/>
<path d="M6.3 26.5l1.2 0 .8 5-2 0z" fill="#333"/>
<polygon points="16.5,23 25,19 34.3,21.8 28.5,25.8" fill="#000"/>
<polygon points="16.5,23 28.5,25.8 28.2,31.2 17,28" fill="#f4f400"/>
<polygon points="28.5,25.8 34.3,21.8 33.8,27 28.2,31.2" fill="#d4107a"/>
<path d="M37.5 44.8l7-7.6 1.2 1.1-7 7.6-1.8.6z" fill="#b0303a"/>
</svg>
<svg class="a" style="left:997.300px;top:111.600px" width="5" height="6.700" viewBox="0 0 6 8"><path d="M1.2 0.5h3.6v4.3h1v.8H3.5v2.2h-.9V5.600H.3v-.8h.9z" fill="#111"/><rect x="2" y="1.3" width="1.2" height="3" fill="#9ab7df"/></svg>
<div class="a" style="left:1009.300px;top:110.600px;width:9px;height:9.400px;background:#c8474f;border-radius:1px"></div>
<svg class="a" style="left:1011.100px;top:112.600px" width="5.400" height="5.400" viewBox="0 0 6 6"><path d="M1 1L5 5M5 1L1 5" stroke="#fff" stroke-width="1.5"/></svg>
<svg class="a" style="left:812px;top:221px" width="209" height="21" viewBox="812 221 209 21">
<!-- refresh -->
<g fill="none" stroke="#111" stroke-width="1.7">
<path d="M818.2 229.6A4.3 4.3 0 0 1 825.6 228.2"/>
<path d="M826.2 232.6A4.3 4.3 0 0 1 818.8 234"/>
</g>
<path d="M824.2 229.9l3.7 -0.2 -0.5 -3.6z" fill="#111"/>
<path d="M820.2 232.300l-3.700 .2 .5 3.600z" fill="#111"/>
<!-- plus circle -->
<circle cx="839" cy="231.200" r="5" fill="none" stroke="#111" stroke-width="1.2"/>
<path d="M836 231.200h6M839 228.200v6" stroke="#111" stroke-width="1.6"/>
<!-- minus circle -->
<circle cx="856.5" cy="231.200" r="5" fill="none" stroke="#111" stroke-width="1.2"/>
<path d="M853.600 231.200h5.800" stroke="#111" stroke-width="1.6"/>
<!-- move up / down -->
<path d="M944.900 227.300h-1.500q-1 0 -1 1v4.700q0 1 -1.500 1.300" fill="none" stroke="#111" stroke-width="2"/>
<path d="M943.600 225.700l2.200 1.700-2.200 1.700z" fill="#111"/>
<path d="M955.400 234.800h1.500q1 0 1 -1v-4.700q0 -1 1.500 -1.300" fill="none" stroke="#111" stroke-width="2"/>
<path d="M956.700 236.400l-2.200-1.700 2.200-1.700z" fill="#111"/>
<!-- view options -->
<g fill="none" stroke="#333" stroke-width=".9"><rect x="970.5" y="227.700" width="3.200" height="3.200"/><rect x="970.5" y="234.200" width="3.200" height="3.200"/></g>
<g stroke="#555" stroke-width=".9"><path d="M976 228h4.500M976 229.800h4.500M976 231.500h3M976 234.500h4.500M976 236.200h4.500M976 238h3"/></g>
<path d="M981.600 231.800h3.600l-1.800 2.200z" fill="#111"/>
<!-- details -->
<rect x="990.300" y="225.300" width="7.500" height="11.600" fill="#111"/>
<rect x="991" y="225.300" width="6.100" height="4.200" fill="#e8e8e8"/>
<path d="M992 226.500h4.200l-2.100 2.400z" fill="#111"/>
<path d="M992 233.400h4.200M994.100 231.300v4.200" stroke="#fff" stroke-width="1.500"/>
<!-- export arrow -->
<rect x="1007.600" y="227" width="5.600" height="8.800" rx="1" fill="#dfe8f8" stroke="#223" stroke-width="1"/>
<path d="M1008.800 229.300h3.400M1008.800 231.200h3.400" stroke="#6a88c8" stroke-width=".8"/>
<path d="M1012.600 226l5.300 5.300-5.300 5.300z" fill="#111"/>
</svg>
<!--TRAYEND-->

<svg class="a" id="annot" style="left:0;top:0;pointer-events:none" width="1024" height="513" viewBox="0 0 1024 513">
<rect x="809.3" y="204" width="210.5" height="221.7" fill="none" stroke="#de2029" stroke-width="3.7"/>
<polygon points="742.6,258.5 775.6,258.5 775.6,248.6 807.5,270.5 775.6,292.4 775.6,282.1 742.6,282.1" fill="none" stroke="#de2029" stroke-width="3.4" stroke-linejoin="miter"/>
</svg>
</body>
</html>
